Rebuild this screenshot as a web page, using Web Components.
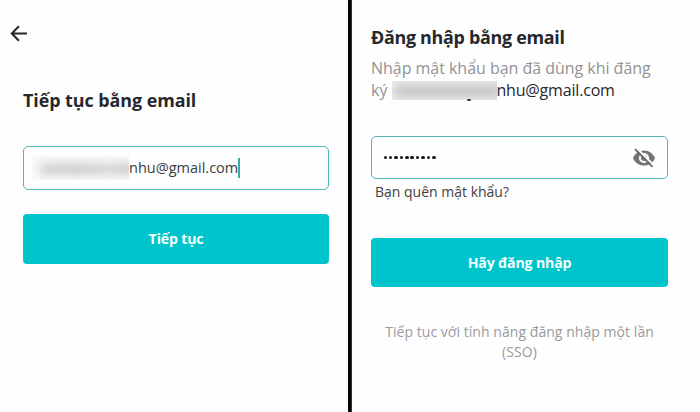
<!DOCTYPE html>
<html lang="vi">
<head>
<meta charset="utf-8">
<title>Đăng nhập bằng email</title>
<style>
  html, body {
    margin: 0;
    height: 412px;
    overflow: hidden;
    background: #fefefe;
    font-family: "Open Sans", "Noto Sans", sans-serif;
    color: #26282e;
  }
</style>
</head>
<body>
<login-screens>
  <login-panel slot="email" class="email">
    <back-arrow></back-arrow>
    <panel-title style="--top: 47px; --line: 23px; --spacing: -.05px">Tiếp tục bằng email</panel-title>
    <text-field style="--height: 44px; --top: 34px">
      <hidden-name style="--width: 97px"></hidden-name><span>nhu@gmail.com</span><text-caret></text-caret>
    </text-field>
    <action-button style="--height: 50px; --top: 24px">Tiếp tục</action-button>
  </login-panel>

  <login-panel slot="password" class="password">
    <panel-title style="--top: 25px; --line: 25px; --spacing: -.29px">Đăng nhập bằng email</panel-title>
    <login-hint>
      <span slot="first">Nhập mật khẩu bạn đã dùng khi đăng</span>
      <span slot="second">ký</span>
      <hidden-name slot="second" tail style="--width: 105px"></hidden-name>
      <span slot="mail">nhu@gmail.com</span>
    </login-hint>
    <text-field style="--height: 43px; --top: 35px">
      <password-dots count="10"></password-dots>
      <eye-off slot="end"></eye-off>
    </text-field>
    <forgot-link>Bạn quên mật khẩu?</forgot-link>
    <action-button style="--height: 49px; --top: 36px">Hãy đăng nhập</action-button>
    <sso-link>Tiếp tục với tính năng đăng nhập một lần (SSO)</sso-link>
  </login-panel>
</login-screens>

<script>
// Base class: puts the markup of each element in its shadow root
class BaseElement extends HTMLElement {
  constructor() {
    super();
    this.attachShadow({ mode: 'open' });
  }

  connectedCallback() {
    this.shadowRoot.innerHTML = this.render();
  }
}

// The two screens with the black bar between them
class LoginScreens extends BaseElement {
  render() {
    return `
      <style>
        :host { display: grid; grid-template-columns: 348px 4px 348px; height: 412px; }
        .bar { background: #050505; border: solid #303030; border-width: 0 1px 0 0; box-sizing: border-box; }
      </style>
      <slot name="email"></slot>
      <div class="bar"></div>
      <slot name="password"></slot>
    `;
  }
}

class LoginPanel extends BaseElement {
  render() {
    return `
      <style>
        :host { display: flex; flex-direction: column; box-sizing: border-box; min-width: 0; }
        :host(.email) { padding: 25px 19px 0 23px; }
        :host(.password) { padding: 0 32px 0 19px; }
      </style>
      <slot></slot>
    `;
  }
}

class BackArrow extends BaseElement {
  render() {
    return `
      <style>
        :host { display: block; width: 17px; height: 17px; margin-left: -13px; }
        svg { display: block; }
      </style>
      <svg width="17" height="17" viewBox="0 0 17 17" fill="none" stroke="#24262b" stroke-width="2">
        <path d="M17 8.5H2M8.9 1.2L1.8 8.5L8.9 15.8"/>
      </svg>
    `;
  }
}

class PanelTitle extends BaseElement {
  render() {
    return `
      <style>
        :host {
          display: block;
          margin-top: var(--top);
          font-size: 17.9px;
          line-height: var(--line);
          letter-spacing: var(--spacing);
          font-weight: 700;
          white-space: nowrap;
        }
      </style>
      <slot></slot>
    `;
  }
}

class TextField extends BaseElement {
  render() {
    return `
      <style>
        :host {
          display: flex;
          align-items: center;
          box-sizing: border-box;
          height: var(--height);
          margin-top: var(--top);
          padding: 0 12px 0 8px;
          border: 1.4px solid #4db6b2;
          border-radius: 5px;
          font-size: 14.5px;
          line-height: 20px;
          color: #3a3a3c;
        }
        .end { margin-left: auto; }
      </style>
      <slot></slot>
      <div class="end"><slot name="end"></slot></div>
    `;
  }
}

// Blurred part of the address
class HiddenName extends BaseElement {
  render() {
    const tail = this.hasAttribute('tail') ? '<i></i>' : '';
    return `
      <style>
        :host { display: block; position: relative; width: var(--width); height: 24px; background: #f9f9f9; flex: none; }
        :host([tail]) { height: 19px; background: #ececec; }
        .clip { position: absolute; inset: 0; overflow: hidden; }
        .smear { position: absolute; left: 8px; right: -4px; top: 7px; height: 12px; background: linear-gradient(90deg, #d4d4d4, #cdcdcd 40%, #d8d8d8 75%, #cacaca); filter: blur(4px); }
        :host([tail]) .smear { left: 3px; top: 4px; background: #c6c6c6; }
        i { position: absolute; left: 75px; bottom: -1px; width: 4px; height: 1.5px; border-radius: 1px; background: #3c3c3c; }
      </style>
      <div class="clip"><div class="smear"></div></div>
      ${tail}
    `;
  }
}

class TextCaret extends BaseElement {
  render() {
    return `
      <style>:host { display: block; width: 2px; height: 20px; background: #3caaa6; }</style>
    `;
  }
}

class ActionButton extends BaseElement {
  render() {
    return `
      <style>
        :host { display: block; margin-top: var(--top); }
        button {
          display: block;
          width: 100%;
          height: var(--height);
          padding: 0;
          border: 0;
          border-radius: 4px;
          background: #00c4cc;
          color: #f4ffff;
          font: 700 14.2px/20px "Open Sans", "Noto Sans", sans-serif;
          letter-spacing: -.2px;
        }
      </style>
      <button><slot></slot></button>
    `;
  }
}

class LoginHint extends BaseElement {
  render() {
    return `
      <style>
        :host { display: block; margin-top: 8px; height: 43px; font-size: 16px; line-height: 21.5px; color: #929294; white-space: nowrap; }
        .first { letter-spacing: -.03px; }
        .second { display: flex; align-items: center; gap: 5px; }
        .mail { color: #26282b; margin-left: -6px; letter-spacing: -.17px; }
      </style>
      <div class="first"><slot name="first"></slot></div>
      <div class="second">
        <slot name="second"></slot>
        <div class="mail"><slot name="mail"></slot></div>
      </div>
    `;
  }
}

class PasswordDots extends BaseElement {
  render() {
    const count = parseInt(this.getAttribute('count')) || 0;
    return `
      <style>
        :host { display: flex; gap: 1.9px; margin-left: 3.5px; }
        span { width: 3.5px; height: 3.5px; border-radius: 50%; background: #17171a; }
      </style>
      ${'<span></span>'.repeat(count)}
    `;
  }
}

class EyeOff extends BaseElement {
  render() {
    return `
      <style>
        :host { display: block; width: 22px; height: 20px; }
        svg { display: block; }
      </style>
      <svg width="22" height="20" viewBox="0 0 22 20">
        <path d="M0 10C1.8 5.4 6 2.4 11 2.4S20.2 5.4 22 10C20.2 14.6 16 17.6 11 17.6S1.8 14.6 0 10Z" fill="#757577"/>
        <circle cx="11" cy="10" r="5.1" fill="#fefefe"/>
        <circle cx="11" cy="10" r="3" fill="#757577"/>
        <path d="M3.4 -.2L21.4 17.8" stroke="#fefefe" stroke-width="2"/>
        <path d="M2 1.2L19.6 18.8" stroke="#6c6c6e" stroke-width="1.9"/>
      </svg>
    `;
  }
}

class ForgotLink extends BaseElement {
  render() {
    return `
      <style>
        :host { display: block; margin: 3px 0 0 4px; font-size: 14px; line-height: 20px; color: #414143; }
      </style>
      <slot></slot>
    `;
  }
}

class SsoLink extends BaseElement {
  render() {
    return `
      <style>
        :host { display: block; margin-top: 35px; font-size: 14px; line-height: 19.5px; letter-spacing: .05px; color: #9a9a9c; text-align: center; }
      </style>
      <slot></slot>
    `;
  }
}

customElements.define('login-screens', LoginScreens);
customElements.define('login-panel', LoginPanel);
customElements.define('back-arrow', BackArrow);
customElements.define('panel-title', PanelTitle);
customElements.define('text-field', TextField);
customElements.define('hidden-name', HiddenName);
customElements.define('text-caret', TextCaret);
customElements.define('action-button', ActionButton);
customElements.define('login-hint', LoginHint);
customElements.define('password-dots', PasswordDots);
customElements.define('eye-off', EyeOff);
customElements.define('forgot-link', ForgotLink);
customElements.define('sso-link', SsoLink);
</script>
</body>
</html>
